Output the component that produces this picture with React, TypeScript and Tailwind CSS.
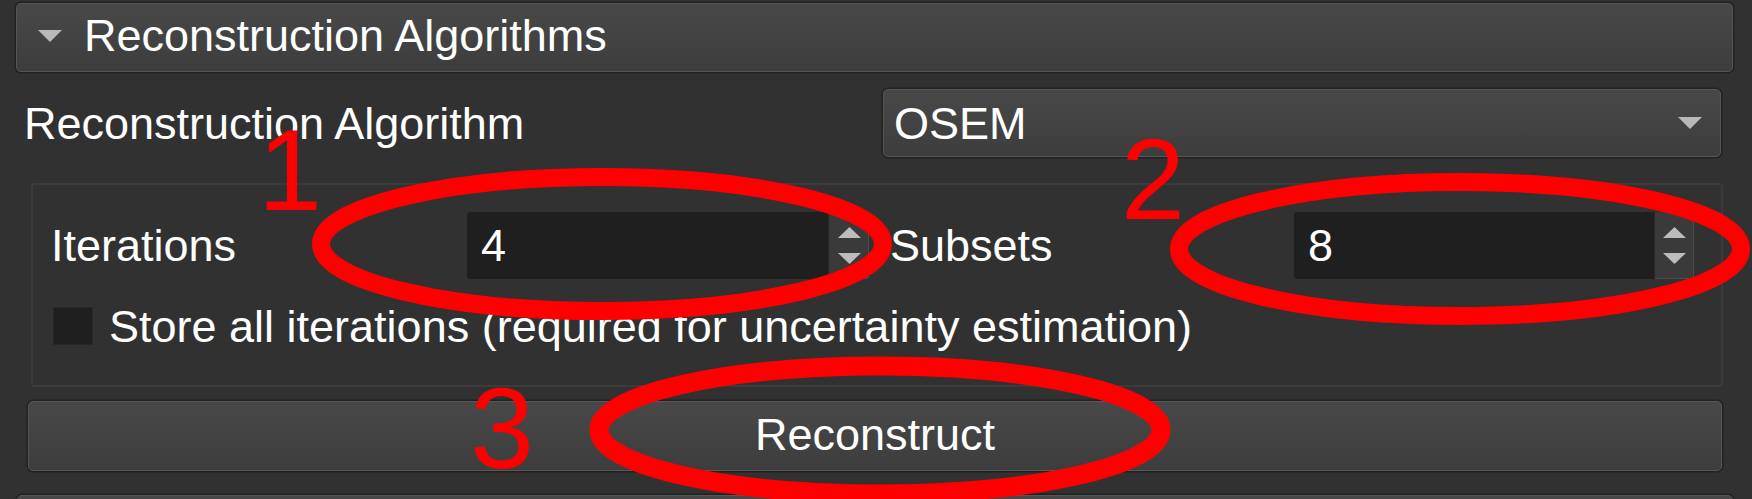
import React from "react";

const Tri = ({ down = true, className = "" }: { down?: boolean; className?: string }) => (
  <svg width="24" height="12" viewBox="0 0 24 12" className={className}>
    {down ? <polygon points="0,0 24,0 12,12" fill="#b9b9b9" /> : <polygon points="0,12 24,12 12,0" fill="#b9b9b9" />}
  </svg>
);

const SpinBox = ({ value, w, field }: { value: string; w: string; field: string }) => (
  <div className={`flex h-[67px] ${w}`}>
    <div className={`flex items-center ${field} h-full bg-[#1f1f1f] rounded-l-[3px] pl-[14px] text-white`}>{value}</div>
    <div className="flex flex-1 flex-col items-center justify-center gap-[15px] h-full bg-[#3a3a3a] border-l border-l-[#262626] rounded-r-[3px] shadow-[inset_-1px_-1px_0_0_#4c4c4c]">
      <svg width="23" height="11" viewBox="0 0 23 11"><polygon points="0,11 23,11 11.5,0" fill="#bcbcbc" /></svg>
      <svg width="23" height="11" viewBox="0 0 23 11"><polygon points="0,0 23,0 11.5,11" fill="#bcbcbc" /></svg>
    </div>
  </div>
);

export default function App() {
  return (
    <div
      className="relative w-[1752px] h-[499px] overflow-hidden bg-[#313131] text-white text-[45px]"
      style={{ fontFamily: '"Liberation Sans", Arial, sans-serif' }}
    >
      <div className="flex flex-col">
        {/* Section header */}
        <div className="mt-[3px] ml-[16px] w-[1717px] h-[69px] flex items-center pb-[4px] rounded-[5px] border border-[#565656] shadow-[0_0_0_1.5px_#222222] bg-linear-to-b from-[#484848] to-[#3d3d3d]">
          <Tri className="ml-[21px] mt-[1px]" />
          <span className="ml-[22px] leading-none">Reconstruction Algorithms</span>
        </div>

        {/* Algorithm row */}
        <div className="flex items-center mt-[17px] h-[68px]">
          <span className="ml-[24px] w-[859px] leading-none">Reconstruction Algorithm</span>
          <div className="w-[838px] h-[68px] flex items-center justify-between pl-[10px] pr-[18px] rounded-[5px] border border-[#565656] shadow-[0_0_0_1.5px_#222222] bg-linear-to-b from-[#484848] to-[#3d3d3d]">
            <span className="leading-none">OSEM</span>
            <Tri />
          </div>
        </div>

        {/* Group box */}
        <div className="mt-[26px] ml-[31px] w-[1692px] h-[204px] rounded-[3px] border-2 border-[#3b3b3b] pl-[18px] pt-[27px] flex flex-col">
          <div className="flex items-center h-[67px]">
            <span className="w-[416px] leading-none">Iterations</span>
            <SpinBox value="4" w="w-[402px]" field="w-[361px]" />
            <span className="ml-[21px] w-[404px] leading-none">Subsets</span>
            <SpinBox value="8" w="w-[400px]" field="w-[360px]" />
          </div>
          <div className="flex items-center mt-[28px] h-[38px]">
            <div className="ml-[2px] w-[40px] h-[38px] bg-[#1f1f1f] border border-[#282828]" />
            <span className="ml-[16px] leading-none">Store all iterations (required for uncertainty estimation)</span>
          </div>
        </div>

        {/* Reconstruct button */}
        <div className="mt-[14px] ml-[28px] w-[1694px] h-[70px] flex items-center justify-center pb-[4px] rounded-[5px] border border-[#565656] shadow-[0_0_0_1.5px_#222222] bg-linear-to-b from-[#484848] to-[#3d3d3d]">
          <span className="leading-none">Reconstruct</span>
        </div>

        {/* Next section header (cut) */}
        <div className="mt-[24px] ml-[17px] w-[1716px] h-[69px] rounded-[5px] border border-[#565656] shadow-[0_0_0_1.5px_#222222] bg-linear-to-b from-[#484848] to-[#3d3d3d]" />
      </div>

      {/* Red annotations overlay */}
      <svg className="absolute left-0 top-0 pointer-events-none" width="1752" height="499" viewBox="0 0 1752 499">
        <ellipse cx="602" cy="244" rx="281" ry="67" fill="none" stroke="#ff0000" strokeWidth="18" />
        <ellipse cx="1460" cy="249" rx="281" ry="67" fill="none" stroke="#ff0000" strokeWidth="18" />
        <ellipse cx="880" cy="430" rx="281" ry="64" fill="none" stroke="#ff0000" strokeWidth="19" />
      </svg>
      <span className="absolute left-[258px] top-[113px] text-[115px] leading-none text-[#ff0000] pointer-events-none">1</span>
      <span className="absolute left-[1121px] top-[122px] text-[115px] leading-none text-[#ff0000] pointer-events-none">2</span>
      <span className="absolute left-[470px] top-[371px] text-[115px] leading-none text-[#ff0000] pointer-events-none">3</span>
    </div>
  );
}
